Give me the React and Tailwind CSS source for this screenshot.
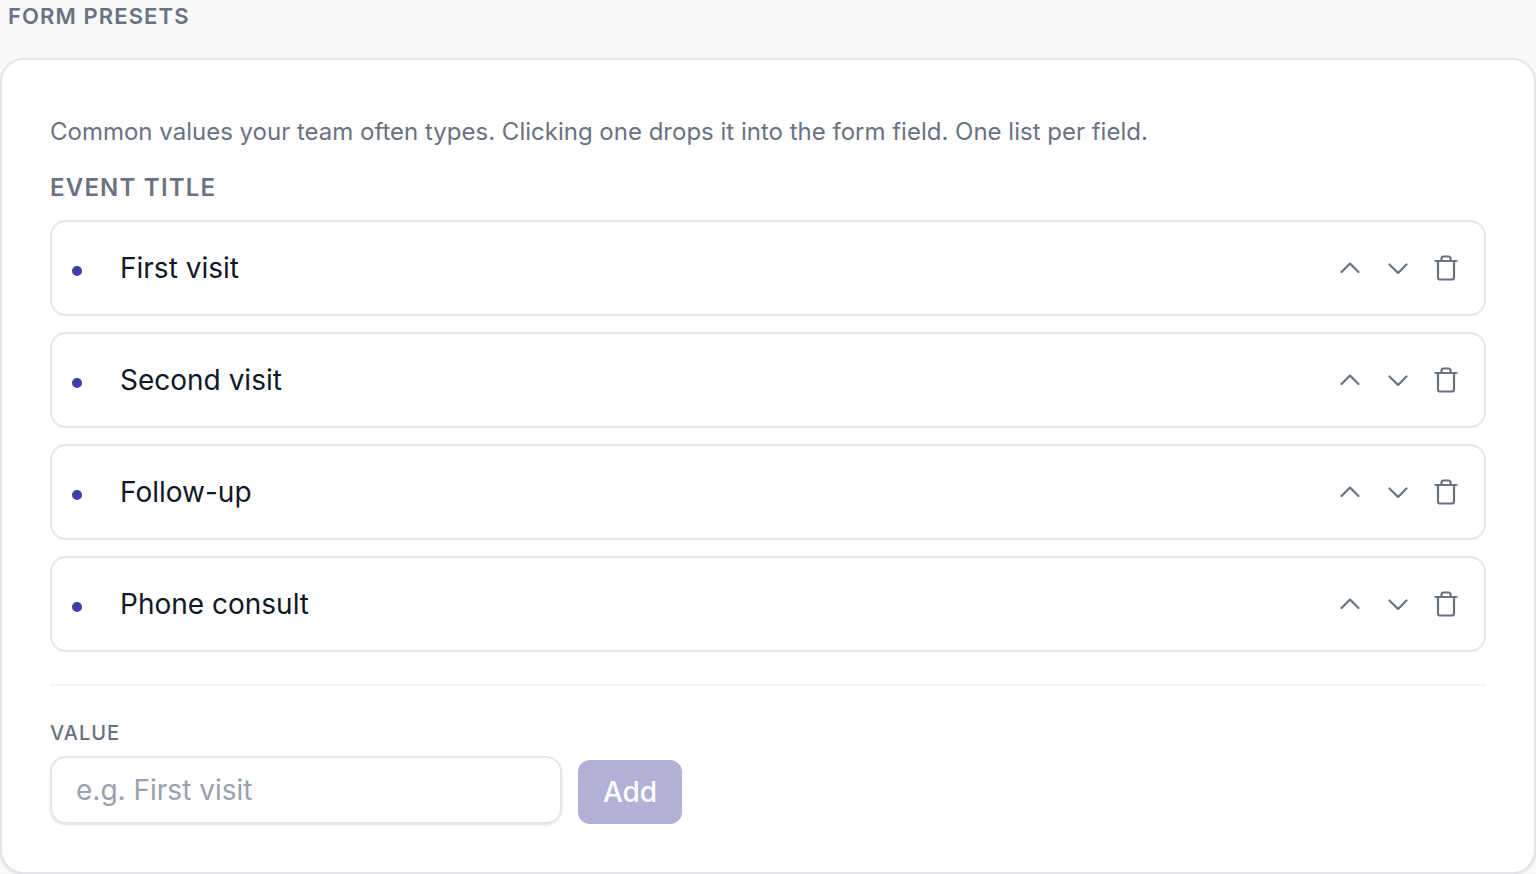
import { useState } from 'react';

const iconButton = 'flex size-12 items-center justify-center text-gray-500 hover:text-gray-900';

function Icon({ children }) {
  return (
    <svg viewBox="0 0 28 28" className="size-7" fill="none" stroke="currentColor" strokeWidth="2.2" strokeLinecap="round" strokeLinejoin="round" aria-hidden="true">
      {children}
    </svg>
  );
}

function PresetRow({ label, onUp, onDown, onRemove }) {
  return (
    <li className="flex h-24 items-center rounded-2xl border-2 border-[#e5e5ea] bg-white pr-[14px] pl-5">
      <span className="mt-[5px] size-[10px] rounded-full bg-[#3f3fa6]" />
      <span className="ml-[38px] flex-1 text-[28px] leading-10 text-gray-900">{label}</span>
      <button type="button" aria-label="Move up" onClick={onUp} className={iconButton}>
        <Icon>
          <path d="M5.5 18 14 9.5l8.5 8.5" />
        </Icon>
      </button>
      <button type="button" aria-label="Move down" onClick={onDown} className={iconButton}>
        <Icon>
          <path d="M5.5 10.5 14 19l8.5-8.5" />
        </Icon>
      </button>
      <button type="button" aria-label="Delete" onClick={onRemove} className={iconButton}>
        <Icon>
          <path d="M3.5 7h21" />
          <path d="M9.5 7V4.5a2 2 0 0 1 2-2h5a2 2 0 0 1 2 2V7" />
          <path d="M6 7v16.5a2 2 0 0 0 2 2h12a2 2 0 0 0 2-2V7" />
        </Icon>
      </button>
    </li>
  );
}

export default function App() {
  const [presets, setPresets] = useState(['First visit', 'Second visit', 'Follow-up', 'Phone consult']);
  const [value, setValue] = useState('');

  const move = (from, to) => {
    if (to < 0 || to >= presets.length) return;
    const next = [...presets];
    const [item] = next.splice(from, 1);
    next.splice(to, 0, item);
    setPresets(next);
  };

  const handleSubmit = (e) => {
    e.preventDefault();
    if (!value.trim()) return;
    setPresets((prev) => [...prev, value.trim()]);
    setValue('');
  };

  return (
    <main className="min-h-screen bg-gray-50 font-['Inter',sans-serif]">
      <h2 className="px-2 pb-[26px] text-[22px] leading-8 font-semibold tracking-wider text-gray-500">FORM PRESETS</h2>
      <section className="rounded-3xl border-2 border-[#e5e5ea] bg-white p-12 shadow-sm">
        <p className="pt-1 text-2xl leading-10 text-gray-500">
          Common values your team often types. Clicking one drops it into the form field. One list per field.
        </p>
        <h3 className="pt-4 text-2xl leading-10 font-semibold tracking-wider text-gray-500">EVENT TITLE</h3>
        <ul className="mt-3 space-y-4">
          {presets.map((preset, index) => (
            <PresetRow
              key={preset}
              label={preset}
              onUp={() => move(index, index - 1)}
              onDown={() => move(index, index + 1)}
              onRemove={() => setPresets(presets.filter((_, i) => i !== index))}
            />
          ))}
        </ul>
        <form onSubmit={handleSubmit} className="mt-8 flex items-end gap-4 border-t-2 border-gray-100 pt-8">
          <div className="w-[512px]">
            <label htmlFor="preset-value" className="mb-2 block text-xl leading-[30px] font-medium tracking-wider text-gray-500">VALUE</label>
            <input
              id="preset-value"
              type="text"
              value={value}
              onChange={(e) => setValue(e.target.value)}
              placeholder="e.g. First visit"
              className="block h-[68px] w-full rounded-2xl border-2 border-[#e5e5ea] px-6 text-[28px] text-gray-900 shadow-sm placeholder:text-gray-400"
            />
          </div>
          <button type="submit" disabled={!value.trim()} className="h-16 w-[104px] rounded-xl bg-[#3d3d9e] text-[28px] font-medium text-white disabled:bg-[#b1b1d8]">
            Add
          </button>
        </form>
      </section>
    </main>
  );
}
